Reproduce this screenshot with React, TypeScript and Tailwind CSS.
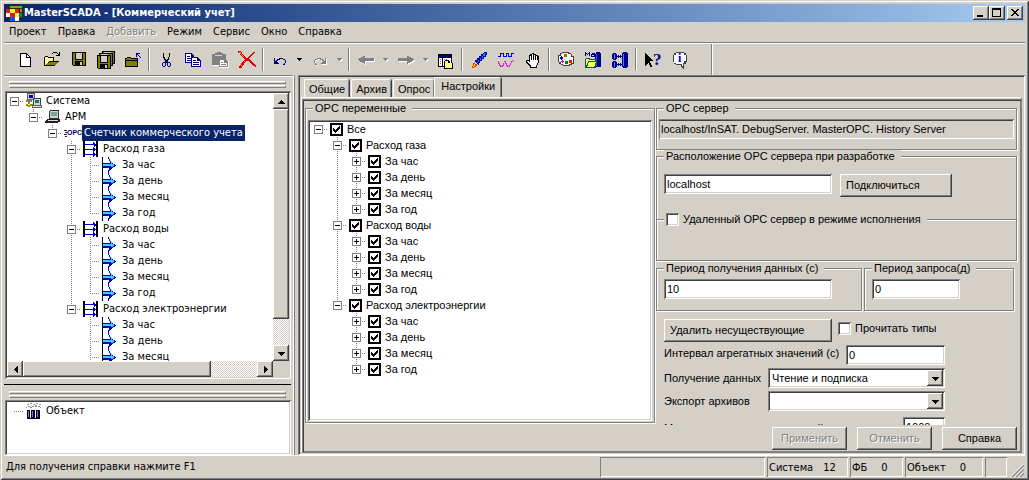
import React from 'react';

const RAISED =
  'bg-[#d4d0c8] shadow-[inset_-1px_-1px_0_#404040,inset_1px_1px_0_#fff,inset_-2px_-2px_0_#808080]';
const SUNKEN =
  'shadow-[inset_1px_1px_0_#808080,inset_-1px_-1px_0_#fff,inset_2px_2px_0_#404040,inset_-2px_-2px_0_#d4d0c8]';
const SYSTEM_FONT = "font-['DejaVu_Sans_Condensed','DejaVu_Sans',sans-serif]";
const FORM_FONT = "font-['Liberation_Sans',sans-serif]";
const DISABLED_TEXT = 'text-[#808080] [text-shadow:1px_1px_0_#fff]';
const TRACK =
  'bg-[repeating-conic-gradient(#fff_0_25%,#d4d0c8_0_50%)] bg-[length:2px_2px]';

/* ---------- toolbar icons, drawn on an 18x18 grid ---------- */

function Icon({ children, className = '' }: { children: React.ReactNode; className?: string }) {
  return (
    <svg
      width="18"
      height="18"
      viewBox="0 0 18 18"
      shapeRendering="crispEdges"
      className={'shrink-0 ' + className}
      aria-hidden="true"
    >
      {children}
    </svg>
  );
}

const NewIcon = () => (
  <Icon>
    <path d="M4 2h7v1h1v1h1v1h1v1h1v10H4z" fill="#000" />
    <path d="M5 3h5v4h4v8H5z" fill="#fff" />
    <path d="M11 4h1v1h1v1h-2z" fill="#fff" />
  </Icon>
);

const OpenIcon = () => (
  <Icon>
    <path d="M10 1h4v1h-4zM9 2h1v1H9zM14 2h1v1h-1zM16 1h1v4h-4v-1h2v-1h1z" fill="#000" />
    <path d="M2 5h3v1h6v4h5v1h-1v1h-1v1h-1v1h-1v1H1V6h1z" fill="#000" />
    <path d="M2 6h3v1h5v3H6v1H5v1H4v1H3v1H2z" fill="#ffffa0" />
    <path d="M6 11h9v1h-1v1h-1v1H3v-1h1v-1h2z" fill="#808000" />
  </Icon>
);

const Floppy = ({ x, y }: { x: number; y: number }) => (
  <g transform={`translate(${x} ${y})`}>
    <path d="M0 0h14v14H1v-1H0z" fill="#000" />
    <path d="M1 1h2v7h8V1h2v12H1z" fill="#808000" />
    <path d="M4 1h6v6H4z" fill="#d4d0c8" />
    <path d="M3 9h8v4H3z" fill="#000" />
    <path d="M8 10h2v3H8z" fill="#d4d0c8" />
  </g>
);

const SaveIcon = () => (
  <Icon>
    <Floppy x={2} y={1} />
  </Icon>
);

const SaveAllIcon = () => (
  <Icon>
    <path d="M5 0h13v13h-2v2h-2V4H2V2h3z" fill="#000" />
    <path d="M6 1h11v1H6zM16 2h1v10h-1zM3 3h12v1H3zM14 4h1v10h-1z" fill="#808000" />
    <path d="M7 1h7v1H7zM4 3h7v1H4z" fill="#d4d0c8" />
    <Floppy x={0} y={4} />
  </Icon>
);

const FolderUpIcon = () => (
  <Icon>
    <path d="M2 7h1V6h4v1h7v9H1V7z" fill="#000" />
    <path d="M3 7h4v1h6v1H2V8h1zM2 10h11v5H2z" fill="#808000" />
    <path d="M12 2h4v1h-2v1h1v1h1v1h1v1h-1V6h-1V5h-1V4h-1v2h-1z" fill="#000080" />
  </Icon>
);

const CutIcon = () => (
  <Icon>
    <path d="M6 2h1v4h1v2h1v1h1V8h1V6h1V2h1v4h-1v3h-1v2h-3V9H7V7H6z" fill="#000" />
    <path
      d="M8 10h3v1h2v1h1v3h-1v1h-2v-1h-1v-3H9v3H8v1H6v-1H5v-3h1v-1h2zM6 12v3h2v-3zM11 12v3h2v-3z"
      fill="#000080"
      fillRule="evenodd"
    />
  </Icon>
);

const CopyIcon = () => (
  <Icon>
    <path d="M1 2h6l3 3v7H1z" fill="#000080" />
    <path d="M2 3h5v3h2v5H2z" fill="#fff" />
    <path d="M3 5h3v1H3zM3 7h5v1H3zM3 9h5v1H3z" fill="#000080" />
    <path d="M7 6h6l4 4v6H7z" fill="#000080" />
    <path d="M8 7h5v3h3v5H8z" fill="#fff" />
    <path d="M9 9h3v1H9zM9 11h6v1H9zM9 13h6v1H9z" fill="#000080" />
  </Icon>
);

const PasteIcon = () => (
  <Icon>
    <path d="M2 4h12v6h4v7H9v-2H2z" fill="#fff" />
    <path d="M1 3h3V2h2V1h4v1h2v1h3v5h-6v6H1z" fill="#808080" />
    <path d="M4 4h7v1H4z" fill="#d4d0c8" />
    <path d="M8 8h6l3 3v5H8z" fill="#808080" />
    <path d="M9 9h4v3h3v3H9z" fill="#fff" />
    <path d="M10 11h2v1h-2zM10 13h5v1h-5z" fill="#808080" />
  </Icon>
);

const DeleteIcon = () => (
  <Icon>
    <path d="M0 0h3v1h1v2h1v1h1v1h1v1h1v1h2V6h1V5h1V4h1V3h1V2h1V1h2v1h-1v1h-1v1h-1v1h-1v1h-1v1h-1v1h1v1h1v1h1v1h1v1h1v1h1v1h1v1h1v1h-2v-1h-2v-1h-1v-1h-1v-1h-1v-1h-1v-1H8v1H7v1H6v2H5v1H4v2H1v-2h1v-1h1v-2h1v-1h1v-1h1V9h1V8H6V7H5V6H4V5H3V4H2V2H0z" fill="#e00000" />
    <path d="M1 1h2v2h1v1h1v1h1v1H5V5H4V4H3V3H2zM6 10h1v1H6zM3 14h1v1H3z" fill="#ff8040" />
  </Icon>
);

const Turn = ({ color }: { color: string }) => (
  <path d="M3 7h1v3h1V9h1V8h2V7h4v1h2v1h1v3h-1v2h-2v-1h1v-1h1V9h-2V8H9v1H7v1h-1v1h1v1h1v1H3z" fill={color} />
);

const UndoIcon = () => (
  <Icon>
    <Turn color="#000080" />
  </Icon>
);

const RedoIcon = () => (
  <Icon>
    <g transform="translate(18 0) scale(-1 1)">
      <g transform="translate(-1 1)">
        <Turn color="#fff" />
      </g>
      <Turn color="#808080" />
    </g>
  </Icon>
);

const ARROW = 'M1 8h1V7h2V6h2V5h2V4h0v3h9v3H8v3H7v-1H5v-1H3v-1H2V9H1z';

const BackIcon = () => (
  <Icon>
    <path d={ARROW} fill="#fff" transform="translate(1 1)" />
    <path d={ARROW} fill="#808080" />
  </Icon>
);

const ForwardIcon = () => (
  <Icon>
    <g transform="translate(18 0) scale(-1 1)">
      <path d={ARROW} fill="#fff" transform="translate(-1 1)" />
      <path d={ARROW} fill="#808080" />
    </g>
  </Icon>
);

const WindowIcon = () => (
  <Icon>
    <path d="M1 3h14v13H1z" fill="#000" />
    <path d="M2 4h12v2H2z" fill="#000080" />
    <path d="M2 7h3v8H2zM6 7h8v8H6z" fill="#fff" />
    <path d="M3 8h1v1H3zM3 10h1v1H3zM3 12h1v1H3zM7 8h1v1H7zM9 8h1v1H9z" fill="#808080" />
    <path d="M7 10h1V9h4v1h1v2h3v6H7z" fill="#000" />
    <path d="M8 10h3v2h4v5H8z" fill="#ffff80" />
  </Icon>
);

const RocketIcon = () => (
  <Icon>
    <path d="M14 1h3v3h-1v2h-2v2h-2v2h-2v2H9v2H8v-1H7v-1H6v-1H5V9h2V7h2V5h2V3h2V2h1z" fill="#0000a0" />
    <path d="M14 2h2v1h-1v2h-2v2h-2v2H9v2H8v1H7v-1h1V9h2V7h2V5h1V3h1z" fill="#2080f0" />
    <path d="M3 12h2v1h2v2H6v1H4v1H2v-2h1z" fill="#ff3000" />
    <path d="M4 13h1v2H4zM1 14h1v1H1zM3 15h1v1H3z" fill="#ffff00" />
  </Icon>
);

const WavesIcon = () => (
  <Icon>
    <path d="M1 5h2V2h4v3h2V2h3v3h2V2h3v1h-2v3h-4V3h-1v3H6V3H4v3H1z" fill="#0000e0" />
    <path d="M1 10h1v2h1v2h1v1h1v-1h1v-2h1v-2h2v2h1v2h1v1h1v-1h1v-2h1v-2h1v-1h1v1h1v1h-1v-1h-1v2h-1v2h-1v2h-3v-1h-1v-2h-1v-2h-1v2H7v2H6v1H3v-1H2v-2H1z" fill="#e020e0" />
  </Icon>
);

const HandIcon = () => (
  <Icon>
    <path d="M8 2h2v1h2v1h2v1h1v7h-1v2h-1v3H6v-2H5v-1H4v-1H3v-1H2V9h3V4h1V3h2z" fill="#000" />
    <path d="M6 5h1v4h1V3h1v6h1V4h1v5h1V5h1v4h1v3h-1v2h-1v2H7v-2H6v-1H5v-1H4v-1H3v-1h2v1h1z" fill="#fff" />
  </Icon>
);

const PaletteIcon = () => (
  <Icon>
    <path d="M5 1h7v1h2v1h1v2h2v8h-2v1h-2v1H6v-1H4v-1H2v-2H1V4h2V2h2z" fill="#404040" />
    <path d="M5 2h6v1h3v3h2v6h-2v1h-2v1H6v-1H4v-2H2V5h2V3h1z" fill="#f8f4e8" />
    <path d="M7 3h3v3H7z" fill="#808000" />
    <path d="M3 6h3v2H3zM4 5h1v4H4z" fill="#0000e0" />
    <path d="M4 10h3v1H4zM5 9h1v3H5z" fill="#c000c0" />
    <path d="M8 10h3v3H8z" fill="#008000" />
    <path d="M12 9h3v3h-3z" fill="#e02020" />
  </Icon>
);

const DatabaseFolderIcon = () => (
  <Icon>
    <path d="M12 1h4v1h1v14h-6V3h1z" fill="#000090" />
    <path d="M12 3h1v12h-1z" fill="#3050ff" />
    <path d="M1 1h1v4H1zM5 1h1v4H5zM2 2h1v1H2zM4 2h1v1H4zM3 3h1v1H3zM8 2h3v1H8zM7 3h4v3H7z" fill="#000080" />
    <path d="M8 4h2v1H8z" fill="#d4d0c8" />
    <path d="M2 7h4v1h6v1h1v5h-1v3H1V8h1z" fill="#006040" />
    <path d="M2 8h3v1h6v1H4v2H3v2H2zM5 11h7v1h-1v3h-1v1H3v-1h1v-3h1z" fill="#ffff60" />
  </Icon>
);

const PipesIcon = () => (
  <Icon>
    <path d="M2 2h3v1h1v5H5v1H2V8H1V3h1zM2 10h3v1h1v5H5v1H2v-1H1v-5h1zM12 1h4v1h1v14h-1v1h-4v-1h-1V2h1z" fill="#000090" />
    <path d="M3 3h1v5H3zM3 11h1v5H3zM12 3h1v12h-1z" fill="#5080ff" />
    <path d="M6 5h1v1H6zM7 4h1v3H7zM8 5h1v1H8zM9 4h1v3H9zM10 5h1v1h-1zM6 13h1v1H6zM7 12h1v3H7zM8 13h1v1H8zM9 12h1v3H9zM10 13h1v1h-1z" fill="#000080" />
  </Icon>
);

const ContextHelpIcon = () => (
  <Icon>
    <path d="M1 2h1v1h1v1h1v1h1v1h1v1h1v1h1v1h1v1H6v2h1v2h1v2H6v-2H5v-2H4v1H3v1H2v1H1z" fill="#000" />
    <text x="9" y="14" fontSize="17" fontWeight="700" fontFamily="Liberation Serif, serif" fill="#000080">?</text>
  </Icon>
);

const InfoIcon = () => (
  <Icon>
    <path d="M5 1h8v1h2v2h1v7h-1v2h-2v5h-1v-1h-1v-1h-1v-2H5v-1H3v-2H2V4h1V2h2z" fill="#404040" />
    <path d="M5 2h8v2h2v6h-2v2h-1v3h-1v-2H5v-1H3V4h2z" fill="#fff" />
    <text x="7" y="11" fontSize="12" fontWeight="700" fontFamily="Liberation Serif, serif" fill="#0000e0">i</text>
  </Icon>
);

const AppIcon = () => (
  <svg width="18" height="16" viewBox="0 0 18 16" shapeRendering="crispEdges" aria-hidden="true">
    <path d="M0 3h3V0h14v13h-3v3H2v-2H0z" fill="#203010" />
    <path d="M4 1h4v2H4zM12 1h4v2h-4z" fill="#40c040" />
    <path d="M8 1h4v2H8zM14 4h2v3h-2z" fill="#e07020" />
    <path d="M14 8h2v4h-2z" fill="#208040" />
    <path d="M0 4h4v4H0zM9 4h4v4H9zM4 8h5v4H4z" fill="#e01818" />
    <path d="M4 4h5v4H4zM9 8h4v4H9z" fill="#fff020" />
    <path d="M0 8h4v4H0zM9 12h4v4H9z" fill="#fff" />
    <path d="M4 12h5v4H4zM13 8h1v5h-1z" fill="#2050f0" />
  </svg>
);

/* ---------- tree icons ---------- */

function TreeSvg({ children }: { children: React.ReactNode }) {
  return (
    <svg width="16" height="16" viewBox="0 0 16 16" shapeRendering="crispEdges" className="shrink-0" aria-hidden="true">
      {children}
    </svg>
  );
}

const TREE_ICONS: Record<string, React.ReactNode> = {
  network: (
    <TreeSvg>
      <path d="M1 0h8v7H1z" fill="#606060" />
      <path d="M2 1h6v5H2z" fill="#d4d0c8" />
      <path d="M3 2h4v3H3z" fill="#0000c0" />
      <path d="M0 7h6v2H0z" fill="#808080" />
      <path d="M2 9h2v5H2zM0 11h7v2H0z" fill="#a09000" />
      <path d="M2 11h2v1H2z" fill="#ffff40" />
      <path d="M7 5h8v8H7z" fill="#404040" />
      <path d="M8 6h6v6H8z" fill="#d4d0c8" />
      <path d="M9 7h4v3H9z" fill="#008080" />
      <path d="M6 12h10v3H6z" fill="#606060" />
      <path d="M7 13h8v1H7z" fill="#e8e4dc" />
    </TreeSvg>
  ),
  computer: (
    <TreeSvg>
      <path d="M5 1h9v9H4V2h1z" fill="#303030" />
      <path d="M5 2h8v7H5z" fill="#d4d0c8" />
      <path d="M6 3h6v4H6z" fill="#70a8a0" />
      <path d="M2 10h13v3h-2v1H0v-2h1v-1h1z" fill="#202020" />
      <path d="M3 11h10v1H2z" fill="#e0dcd4" />
    </TreeSvg>
  ),
  opc: (
    <span className="flex w-4 shrink-0 items-center">
      <svg width="3" height="16" viewBox="0 0 3 16" shapeRendering="crispEdges" className="shrink-0" aria-hidden="true">
        <path d="M0 5h3v1H0zM1 7h2v1H1zM0 9h3v1H0zM1 11h2v1H1z" fill="#202020" />
      </svg>
      <span className="font-['Liberation_Sans_Narrow','Liberation_Sans',sans-serif] text-[7px] font-bold leading-4 text-[#000080]">OPC</span>
    </span>
  ),
  group: (
    <TreeSvg>
      <path d="M0 0h2v16H0zM13 0h2v16h-2z" fill="#000" />
      <path d="M2 3h11v1H2zM2 8h11v1H2zM2 13h11v1H2zM10 1h1v1h1v1h1v2h-1v1h-1V4h-1zM10 6h1v1h1v3h-1v1h-1zM10 11h1v1h1v3h-1v1h-1z" fill="#0000c8" />
    </TreeSvg>
  ),
  variable: (
    <TreeSvg>
      <path d="M0 0h1v16H0z" fill="#000" />
      <path d="M6 0h1v2H6zM7 2h1v2H7zM8 4h1v1h1v1h1v1h2v1h1v1h-1v1h-2v1h-1v1H9v1H8v1H7v2H6v-3h1v-2H1V6h7z" fill="#0000c8" />
      <path d="M1 7h8V5h1v2h2v2h-1v1H9v-1H1z" fill="#40d0ff" />
    </TreeSvg>
  ),
  object: (
    <TreeSvg>
      <path d="M1 1h2v1H1zM4 0h2v1H4zM7 1h2v1H7zM10 0h2v1h-2zM13 1h2v1h-2zM2 3h2v1H2zM6 3h2v1H6zM9 2h2v2H9zM12 3h2v1h-2zM0 4h1v1H0zM4 4h2v1H4zM14 4h1v1h-1z" fill="#909090" />
      <path d="M1 7h3v8h1V7h4v8h1V7h4v9H1z" fill="#000030" />
      <path d="M2 8h1v6H2zM6 8h1v6H6zM11 8h1v6h-1z" fill="#8080b0" />
    </TreeSvg>
  ),
};

/* ---------- tree rows ---------- */

type Branch = 'blank' | 'line' | 'tee' | 'end' | 'start' | 'single';

function Guide({ kind, box }: { kind: Branch; box?: 'plus' | 'minus' }) {
  const dots = { stroke: '#808080', strokeWidth: 1, strokeDasharray: '1 1' };
  const top = kind === 'line' || kind === 'tee' || kind === 'end';
  const bottom = kind === 'line' || kind === 'tee' || kind === 'start';
  const right = kind !== 'line' && kind !== 'blank';
  return (
    <svg width="19" height="16" viewBox="0 0 19 16" shapeRendering="crispEdges" className="shrink-0" aria-hidden="true">
      {top && <path d="M7.5 0V8" {...dots} />}
      {bottom && <path d="M7.5 8V16" {...dots} />}
      {right && <path d="M7 8.5H17" {...dots} />}
      {box && (
        <>
          <rect x="3.5" y="4.5" width="8" height="8" fill="#fff" stroke="#808080" />
          <path d={box === 'plus' ? 'M5 8h5v1H5zM7 6h1v5H7z' : 'M5 8h5v1H5z'} fill="#000" />
        </>
      )}
    </svg>
  );
}

type Row = { label: string; icon?: string; guides: Branch[]; box?: 'plus' | 'minus'; selected?: boolean };

const PERIODS = ['За час', 'За день', 'За месяц', 'За год'];
const FLOWS = ['Расход газа', 'Расход воды', 'Расход электроэнергии'];

const systemRows: Row[] = [
  { label: 'Система', icon: 'network', guides: ['single'], box: 'minus' },
  { label: 'АРМ', icon: 'computer', guides: ['blank', 'end'], box: 'minus' },
  { label: 'Счетчик коммерческого учета', icon: 'opc', guides: ['blank', 'blank', 'end'], box: 'minus', selected: true },
  ...FLOWS.flatMap((flow, f): Row[] => {
    const last = f === FLOWS.length - 1;
    return [
      { label: flow, icon: 'group', guides: ['blank', 'blank', 'blank', last ? 'end' : 'tee'], box: 'minus' },
      ...PERIODS.map((label, p): Row => ({
        label,
        icon: 'variable',
        guides: ['blank', 'blank', 'blank', last ? 'blank' : 'line', p === PERIODS.length - 1 ? 'end' : 'tee'],
      })),
    ];
  }),
];

const variableRows: Row[] = [
  { label: 'Все', guides: ['single'], box: 'minus' },
  ...FLOWS.flatMap((flow, f): Row[] => {
    const last = f === FLOWS.length - 1;
    return [
      { label: flow, guides: ['blank', last ? 'end' : 'tee'], box: 'minus' },
      ...PERIODS.map((label, p): Row => ({
        label,
        guides: ['blank', last ? 'blank' : 'line', p === PERIODS.length - 1 ? 'end' : 'tee'],
        box: 'plus',
      })),
    ];
  }),
];

function SystemRow({ row }: { row: Row }) {
  const last = row.guides.length - 1;
  return (
    <li className="flex h-4 items-center whitespace-nowrap">
      {row.guides.map((kind, i) => (
        <Guide key={i} kind={kind} box={i === last ? row.box : undefined} />
      ))}
      {row.icon && TREE_ICONS[row.icon]}
      <span className={'ml-0.5 h-4 px-0.5 leading-4 ' + (row.selected ? 'bg-[#0a246a] text-white' : '')}>{row.label}</span>
    </li>
  );
}

function VariableRow({ row }: { row: Row }) {
  const last = row.guides.length - 1;
  return (
    <li className="flex h-4 items-center whitespace-nowrap">
      {row.guides.map((kind, i) => (
        <Guide key={i} kind={kind} box={i === last ? row.box : undefined} />
      ))}
      <label className="flex items-center gap-1">
        <span className="grid">
          <input
            type="checkbox"
            defaultChecked
            className="peer col-start-1 row-start-1 size-[13px] appearance-none border-2 border-black bg-white"
          />
          <svg
            width="13"
            height="13"
            viewBox="0 0 13 13"
            shapeRendering="crispEdges"
            className="pointer-events-none invisible col-start-1 row-start-1 peer-checked:visible"
            aria-hidden="true"
          >
            <path d="M3 5h1v1h1v1h1V6h1V5h1V4h1V3h1v3H9v1H8v1H7v1H6v1H5V9H4V8H3z" fill="#000" />
          </svg>
        </span>
        {row.label}
      </label>
    </li>
  );
}

/* ---------- shared pieces ---------- */

function Triangle({ dir }: { dir: 'up' | 'down' | 'left' | 'right' }) {
  const d = {
    up: 'M3 0h1v1h1v1h1v1h1v1H0V3h1V2h1V1h1z',
    down: 'M0 0h7v1H6v1H5v1H4v1H3V3H2V2H1V1H0z',
    left: 'M3 0h1v7H3V6H2V5H1V4H0V3h1V2h1V1h1z',
    right: 'M0 0h1v1h1v1h1v1h1v1H3v1H2v1H1v1H0z',
  }[dir];
  return (
    <svg width="7" height="7" viewBox={dir === 'up' || dir === 'down' ? '0 -2 7 7' : '-2 0 7 7'} shapeRendering="crispEdges" aria-hidden="true">
      <path d={d} />
    </svg>
  );
}

function ScrollButton({ dir, name }: { dir: 'up' | 'down' | 'left' | 'right'; name: string }) {
  return (
    <button type="button" aria-label={name} className={'flex size-4 shrink-0 items-center justify-center ' + RAISED}>
      <Triangle dir={dir} />
    </button>
  );
}

function Gripper() {
  return (
    <div className="mx-[5px] flex flex-col gap-px">
      <div className="h-[3px] border border-white border-r-[#808080] border-b-[#808080]" />
      <div className="h-[3px] border border-white border-r-[#808080] border-b-[#808080]" />
    </div>
  );
}

const Separator = () => (
  <div className="flex w-1.5 shrink-0 justify-center" role="separator">
    <div className="h-[23px] w-0.5 border-l border-[#808080] bg-white" />
  </div>
);

function ToolButton({ name, disabled, children }: { name: string; disabled?: boolean; children: React.ReactNode }) {
  return (
    <button type="button" aria-label={name} disabled={disabled} className="flex h-6 w-[27px] shrink-0 items-center justify-center">
      {children}
    </button>
  );
}

function DropButton({ name, disabled }: { name: string; disabled?: boolean }) {
  return (
    <button type="button" aria-label={name} disabled={disabled} className="flex h-6 w-[13px] shrink-0 items-center justify-center">
      <svg width="6" height="4" viewBox="0 0 6 4" shapeRendering="crispEdges" aria-hidden="true">
        {disabled && <path d="M1 1h5v1H5v1H4v1H3V3H2V2H1z" fill="#fff" />}
        <path d="M0 0h5v1H4v1H3v1H2V2H1V1H0z" fill={disabled ? '#808080' : '#000'} />
      </svg>
    </button>
  );
}

function Group({
  title,
  className = '',
  body = '',
  children,
}: {
  title: React.ReactNode;
  className?: string;
  body?: string;
  children?: React.ReactNode;
}) {
  return (
    <fieldset
      className={
        'min-w-0 border border-[#808080] p-0 shadow-[1px_1px_0_#fff,inset_1px_1px_0_#fff] ' + className
      }
    >
      <legend className="ml-[7px] h-[13px] bg-[#d4d0c8] pl-0.5 pr-1.5 leading-[13px]">{title}</legend>
      <div className={body}>{children}</div>
    </fieldset>
  );
}

function TextField({ id, value, className = '', label }: { id?: string; value: string; className?: string; label?: string }) {
  return (
    <input
      id={id}
      type="text"
      defaultValue={value}
      aria-label={label}
      className={'h-5 min-w-0 bg-white px-[3px] ' + SUNKEN + ' ' + className}
    />
  );
}

function PushButton({ children, disabled, className = '' }: { children: React.ReactNode; disabled?: boolean; className?: string }) {
  return (
    <button
      type="button"
      disabled={disabled}
      className={'h-[23px] shrink-0 ' + RAISED + ' ' + (disabled ? DISABLED_TEXT : '') + ' ' + className}
    >
      {children}
    </button>
  );
}

function Check({ label }: { label: string }) {
  return (
    <label className="flex items-center gap-1 whitespace-nowrap">
      <input type="checkbox" className={'size-[13px] shrink-0 appearance-none bg-white checked:bg-[#404040] ' + SUNKEN} />
      {label}
    </label>
  );
}

function Dropdown({ id, options }: { id: string; options: string[] }) {
  return (
    <div className={'grid h-5 w-[177px] bg-white p-0.5 ' + SUNKEN}>
      <select id={id} className="col-start-1 row-start-1 h-4 appearance-none bg-transparent pl-0.5">
        {options.map((o) => (
          <option key={o}>{o}</option>
        ))}
      </select>
      <span className={'pointer-events-none col-start-1 row-start-1 flex size-4 items-center justify-center justify-self-end ' + RAISED}>
        <Triangle dir="down" />
      </span>
    </div>
  );
}

/* ---------- page parts ---------- */

function TitleBar() {
  return (
    <header className="flex h-[18px] shrink-0 items-center bg-linear-to-r from-[#0a246a] to-[#a6caf0] pl-0.5 pr-0.5 text-white">
      <AppIcon />
      <h1 className="flex-1 text-[11px] font-bold leading-[18px]">MasterSCADA - [Коммерческий учет]</h1>
      <button type="button" aria-label="Свернуть" className={'h-3.5 w-4 ' + RAISED}>
        <svg width="16" height="14" shapeRendering="crispEdges" aria-hidden="true">
          <path d="M4 9h6v2H4z" />
        </svg>
      </button>
      <button type="button" aria-label="Развернуть" className={'h-3.5 w-4 ' + RAISED}>
        <svg width="16" height="14" shapeRendering="crispEdges" aria-hidden="true">
          <path d="M3 2h9v9H3zM4 4v6h7V4z" fillRule="evenodd" />
        </svg>
      </button>
      <button type="button" aria-label="Закрыть" className={'ml-0.5 h-3.5 w-4 ' + RAISED}>
        <svg width="16" height="14" shapeRendering="crispEdges" aria-hidden="true">
          <path d="M4 3h2v1h1v1h2V4h1V3h2v1h-1v1h-1v1H9v1h1v1h1v1h1v1h-2V9H9V8H7v1H6v1H4V9h1V8h1V7h1V6H6V5H5V4H4z" />
        </svg>
      </button>
    </header>
  );
}

const MENU = ['Проект', 'Правка', 'Добавить', 'Режим', 'Сервис', 'Окно', 'Справка'];

function MenuBar() {
  return (
    <nav className="flex h-[22px] shrink-0 items-start gap-[11px] border-b border-white pl-[5px] shadow-[inset_0_-1px_0_#808080]">
      {MENU.map((item) => (
        <button
          key={item}
          type="button"
          disabled={item === 'Добавить'}
          className={'h-5 leading-5 ' + (item === 'Добавить' ? DISABLED_TEXT : '')}
        >
          {item}
        </button>
      ))}
    </nav>
  );
}

function Toolbar() {
  return (
    <div className="flex h-[31px] shrink-0" role="toolbar">
      <div className="flex w-[708px] items-center border-r border-[#808080] pl-[7px] shadow-[1px_0_0_#fff]">
        <ToolButton name="Новый"><NewIcon /></ToolButton>
        <ToolButton name="Открыть"><OpenIcon /></ToolButton>
        <ToolButton name="Сохранить"><SaveIcon /></ToolButton>
        <ToolButton name="Сохранить все"><SaveAllIcon /></ToolButton>
        <ToolButton name="Закрыть проект"><FolderUpIcon /></ToolButton>
        <Separator />
        <ToolButton name="Вырезать"><CutIcon /></ToolButton>
        <ToolButton name="Копировать"><CopyIcon /></ToolButton>
        <ToolButton name="Вставить" disabled><PasteIcon /></ToolButton>
        <ToolButton name="Удалить"><DeleteIcon /></ToolButton>
        <Separator />
        <ToolButton name="Отменить действие"><UndoIcon /></ToolButton>
        <DropButton name="Список отмены" />
        <ToolButton name="Повторить" disabled><RedoIcon /></ToolButton>
        <DropButton name="Список повтора" disabled />
        <Separator />
        <ToolButton name="Назад" disabled><BackIcon /></ToolButton>
        <DropButton name="Список назад" disabled />
        <ToolButton name="Вперед" disabled><ForwardIcon /></ToolButton>
        <DropButton name="Список вперед" disabled />
        <ToolButton name="Окна"><WindowIcon /></ToolButton>
        <Separator />
        <ToolButton name="Запуск"><RocketIcon /></ToolButton>
        <ToolButton name="Сигналы"><WavesIcon /></ToolButton>
        <ToolButton name="Рука"><HandIcon /></ToolButton>
        <Separator />
        <ToolButton name="Палитра"><PaletteIcon /></ToolButton>
        <ToolButton name="База"><DatabaseFolderIcon /></ToolButton>
        <ToolButton name="Связи"><PipesIcon /></ToolButton>
        <Separator />
        <ToolButton name="Контекстная справка"><ContextHelpIcon /></ToolButton>
        <ToolButton name="О программе"><InfoIcon /></ToolButton>
      </div>
    </div>
  );
}

function Sidebar() {
  return (
    <aside className="flex w-[290px] shrink-0 flex-col border-r border-white pr-0.5 shadow-[inset_0_1px_0_#808080,inset_0_2px_0_#fff,1px_0_0_#808080]">
      <div className="pb-[3px] pt-[6px]">
        <Gripper />
      </div>
      <div className={'ml-px flex min-h-0 flex-1 flex-col p-0.5 ' + SUNKEN}>
        <div className="flex min-h-0 flex-1">
          <ul className="min-w-0 flex-1 overflow-hidden bg-white">
            {systemRows.map((row, i) => (
              <SystemRow key={i} row={row} />
            ))}
          </ul>
          <div className={'flex w-4 flex-col ' + TRACK}>
            <ScrollButton dir="up" name="Вверх" />
            <div className={'flex-[211] ' + RAISED} />
            <div className="flex-[26]" />
            <ScrollButton dir="down" name="Вниз" />
          </div>
        </div>
        <div className="flex h-4 shrink-0 pr-4">
          <ScrollButton dir="left" name="Влево" />
          <div className={'flex-[190] ' + RAISED} />
          <div className={'flex-[46] self-stretch ' + TRACK} />
          <ScrollButton dir="right" name="Вправо" />
        </div>
      </div>
      <div className="mb-[6px] mt-[5px] h-px bg-black" />
      <Gripper />
      <div className={'ml-px mt-[2px] h-[55px] bg-white px-0.5 pb-0.5 pt-[3px] ' + SUNKEN}>
        <ul>
          <SystemRow row={{ label: 'Объект', icon: 'object', guides: ['single'] }} />
        </ul>
      </div>
    </aside>
  );
}

function Tabs() {
  const edge = 'border-l border-t border-white shadow-[inset_-1px_0_0_#808080,1px_0_0_#404040] rounded-t-[2px]';
  return (
    <div className="flex h-5 items-end gap-0.5 pl-[3px]" role="tablist">
      {['Общие', 'Архив', 'Опрос'].map((t) => (
        <button key={t} type="button" role="tab" aria-selected={false} className={'h-[18px] px-1 leading-4 ' + edge}>
          {t}
        </button>
      ))}
      <button type="button" role="tab" aria-selected className={'-mb-px -ml-0.5 h-[21px] bg-[#d4d0c8] px-1.5 pb-1 leading-4 ' + edge}>
        Настройки
      </button>
    </div>
  );
}

function SettingsForm() {
  return (
    <form className="flex w-[364px] shrink-0 flex-col overflow-hidden pl-px pr-0.5" onSubmit={(e) => e.preventDefault()}>
      <Group title="OPC сервер" className="shrink-0" body="px-0.5 pb-[10px] pt-1">
        <input
          type="text"
          readOnly
          aria-label="OPC сервер"
          defaultValue="localhost/InSAT. DebugServer. MasterOPC. History Server"
          className="block h-5 w-full bg-transparent px-0.5 shadow-[inset_1px_1px_0_#808080,inset_-1px_-1px_0_#fff,inset_0_2px_0_#404040]"
        />
      </Group>
      <Group
        title="Расположение OPC сервера при разработке"
        className="shrink-0 border-b-0 shadow-[inset_1px_1px_0_#fff,1px_0_0_#fff]"
        body="px-[7px] pb-[22px] pt-[11px]"
      >
        <div className="flex items-start gap-2">
          <TextField value="localhost" label="Расположение OPC сервера" className="w-[168px]" />
          <PushButton className="w-28 pl-1.5 text-left">Подключиться</PushButton>
        </div>
      </Group>
      <Group title={<Check label="Удаленный OPC сервер в режиме исполнения" />} className="-mt-[6px] h-12 shrink-0" />
      <div className="mt-px flex shrink-0 gap-0.5">
        <Group title={<label htmlFor="period">Период получения данных (с)</label>} className="w-[206px]" body="px-[7px] pb-[11px] pt-1">
          <TextField id="period" value="10" className="block w-[168px]" />
        </Group>
        <Group title={<label htmlFor="request">Период запроса(д)</label>} className="w-[150px]" body="px-[7px] pb-[11px] pt-1">
          <TextField id="request" value="0" className="block w-22" />
        </Group>
      </div>
      <div className="mt-2 flex shrink-0 items-start gap-1.5 pl-2">
        <PushButton className="w-[168px] pl-1.5 text-left">Удалить несуществующие</PushButton>
        <div className="pt-[3px]">
          <Check label="Прочитать типы" />
        </div>
      </div>
      <div className="flex w-[289px] shrink-0 flex-col gap-[3px] pl-2 pt-[3px]">
        <div className="flex justify-between">
          <label htmlFor="interval" className="leading-4">Интервал агрегатных значений (с)</label>
          <TextField id="interval" value="0" className="w-[99px]" />
        </div>
        <div className="flex items-center justify-between">
          <label htmlFor="mode">Получение данных</label>
          <Dropdown id="mode" options={['Чтение и подписка']} />
        </div>
        <div className="flex items-center justify-between">
          <label htmlFor="export">Экспорт архивов</label>
          <Dropdown id="export" options={['']} />
        </div>
        <div className="flex items-start justify-between pt-[3px]">
          <label htmlFor="limit" className="leading-[22px]">Максимальное число значений</label>
          <TextField id="limit" value="1000" className="w-[42px]" />
        </div>
      </div>
    </form>
  );
}

function Workspace() {
  return (
    <main className={'ml-1 flex min-w-0 flex-1 flex-col pb-0.5 pl-[3px] pr-[3px] pt-0.5 ' + SUNKEN + ' ' + FORM_FONT}>
      <Tabs />
      <div className="flex min-h-0 flex-1 flex-col border border-white border-b-[#808080] border-r-[#808080] pt-px">
        <div className="flex min-h-0 flex-1 flex-col pl-[3px] pr-0.5 pt-[3px] shadow-[inset_1px_1px_0_#808080,inset_2px_2px_0_#404040,inset_-1px_-1px_0_#808080]">
          <div className="flex min-h-0 flex-1 overflow-hidden">
            <Group title="OPC переменные" className="mb-0.5 flex flex-1 flex-col" body="min-h-0 flex-1 px-0.5 pb-px pt-[5px] h-full">
              <div className={'h-full bg-white px-[3px] pt-px ' + SUNKEN}>
                <ul>
                  {variableRows.map((row, i) => (
                    <VariableRow key={i} row={row} />
                  ))}
                </ul>
              </div>
            </Group>
            <SettingsForm />
          </div>
          <div className="flex shrink-0 justify-end gap-2.5 pb-0.5 pr-0.5 pt-0.5">
            <PushButton disabled className="w-[75px]">Применить</PushButton>
            <PushButton disabled className="w-[75px]">Отменить</PushButton>
            <PushButton className="w-[75px]">Справка</PushButton>
          </div>
        </div>
      </div>
    </main>
  );
}

function StatusBar() {
  const cell = 'flex h-5 items-center whitespace-pre pl-0.5 shadow-[inset_1px_1px_0_#808080,inset_-1px_-1px_0_#fff]';
  return (
    <footer className="flex h-[22px] shrink-0 items-end gap-0.5 border-t border-white">
      <p className="flex-1 self-center pl-0.5">Для получения справки нажмите F1</p>
      <div className={cell + ' w-[165px]'} />
      <div className={cell + ' w-[81px] gap-2.5'}><span>Система</span><span>12</span></div>
      <div className={cell + ' w-[53px] gap-3.5'}><span>ФБ</span><span>0</span></div>
      <div className={cell + ' w-[78px] gap-3.5'}><span>Объект</span><span>0</span></div>
      <div className={cell + ' w-[22px]'} />
      <svg width="15" height="14" viewBox="0 0 15 14" className="mr-px" aria-hidden="true">
        <path d="M3 14L15 2M7 14L15 6M11 14L15 10" stroke="#808080" strokeWidth="1.5" />
        <path d="M1.500 14L15 .5M5.500 14L15 4.500M9.500 14L15 8.500" stroke="#fff" />
      </svg>
    </footer>
  );
}

export default function App() {
  return (
    <div
      className={
        'flex h-screen flex-col overflow-hidden bg-[#d4d0c8] pb-[3px] pl-1 pr-1 pt-1 text-[11px] leading-[13px] text-black shadow-[inset_1px_1px_0_#d4d0c8,inset_-1px_-1px_0_#404040,inset_2px_2px_0_#fff,inset_-2px_-2px_0_#808080] ' +
        SYSTEM_FONT
      }
    >
      <TitleBar />
      <MenuBar />
      <Toolbar />
      <div className="flex min-h-0 flex-1">
        <Sidebar />
        <Workspace />
      </div>
      <StatusBar />
    </div>
  );
}
